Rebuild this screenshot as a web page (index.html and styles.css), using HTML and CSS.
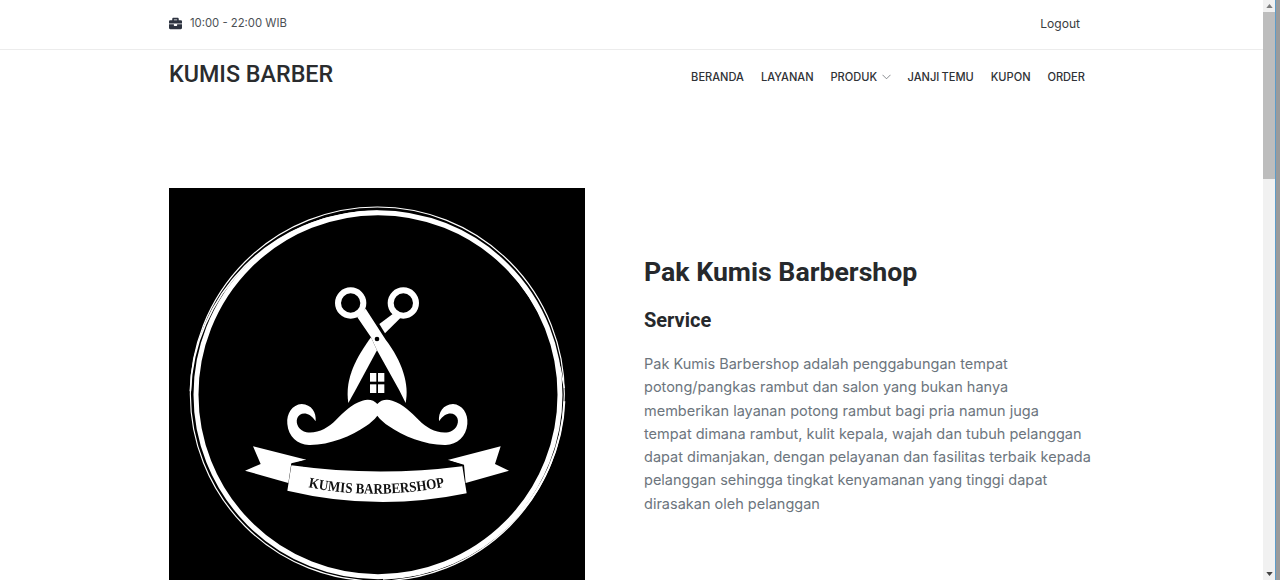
FILE: index.html
```html
<!DOCTYPE html>
<html lang="id">
<head>
<meta charset="utf-8">
<title>Kumis Barber</title>
<link rel="stylesheet" href="styles.css">
</head>
<body>
<div class="page">
  <div class="content">
    <div class="topbar">
      <div class="wrap topbar-inner">
        <div class="hours">
          <svg class="briefcase" viewBox="0 0 512 512" aria-hidden="true"><path d="M320 336c0 8.84-7.16 16-16 16h-96c-8.84 0-16-7.16-16-16v-48H0v144c0 25.6 22.4 48 48 48h416c25.6 0 48-22.4 48-48V288H320v48zm144-208h-80V80c0-25.6-22.4-48-48-48H176c-25.6 0-48 22.4-48 48v48H48c-25.6 0-48 22.4-48 48v80h512v-80c0-25.6-22.4-48-48-48zm-144 0H192V96h128v32z"/></svg>
          <span>10:00 - 22:00 WIB</span>
        </div>
        <a class="logout" href="#">Logout</a>
      </div>
    </div>
    <header class="wrap header">
      <a class="brand" href="#">KUMIS BARBER</a>
      <nav class="nav">
        <a href="#">BERANDA</a>
        <a href="#">LAYANAN</a>
        <a href="#" class="has-sub">PRODUK
          <svg class="chev" viewBox="0 0 9 6" aria-hidden="true"><polyline points="0.5,0.8 4.5,4.8 8.5,0.8"/></svg>
        </a>
        <a href="#">JANJI TEMU</a>
        <a href="#">KUPON</a>
        <a href="#">ORDER</a>
      </nav>
    </header>
    <section class="wrap about">
      <div class="logo-box">
        <svg class="logo" viewBox="0 0 1251 1251" role="img" aria-label="Logo Kumis Barbershop">
          <rect width="1251" height="1251" fill="#000"/>
          <g class="soft">
            <g fill="none" stroke="#fff">
              <circle cx="627" cy="620" r="546" stroke-width="15"/>
              <circle cx="625" cy="618" r="561" stroke-width="3.5"/>
              <path d="M64 610C72 330 302 72 626 70" stroke-width="5"/>
              <path d="M1186 640C1176 920 942 1164 642 1172" stroke-width="6"/>
              <path d="M620 70C902 72 1132 280 1186 600" stroke-width="4"/>
            </g>
            <g fill="none" stroke="#fff" stroke-width="18">
              <circle cx="545" cy="345" r="38"/>
              <circle cx="703" cy="345" r="38"/>
            </g>
            <g fill="#fff">
              <path d="M590 362L650 455C700 520 722 590 710 645L690 605L624 487L606 448L565 388Z"/>
              <path d="M671 378L631 408L648 436L698 386Z"/>
              <path d="M606 448C565 505 526 570 538 645L560 605L624 487Z"/>
              <rect x="603" y="555" width="19" height="26"/>
              <rect x="627" y="555" width="19" height="26"/>
              <rect x="603" y="589" width="19" height="26"/>
              <rect x="627" y="589" width="19" height="26"/>
              <path d="M625 648C615 636 598 632 580 638C548 648 524 672 500 697C478 720 445 738 412 733C392 729 378 708 385 690C392 672 420 668 440 700C442 672 428 650 398 648C370 650 352 676 355 708C358 745 385 770 420 771C480 772 548 745 590 715C604 705 616 695 625 683C634 695 646 705 660 715C702 745 770 772 830 771C865 770 892 745 895 708C898 676 880 650 852 648C822 650 808 672 810 700C830 668 858 672 865 690C872 708 858 729 838 733C805 738 772 720 750 697C726 672 702 648 670 638C652 632 635 636 625 648Z"/>
              <path d="M367 832Q624 868 880 835L893 916Q624 972 355 908Z"/>
              <path d="M252 775L412 815L367 826L358 885L228 848L275 828Z"/>
              <path d="M995 775L836 816L885 830L890 885L1020 848L978 828Z"/>
            </g>
            <g fill="none" stroke="#000" stroke-width="3">
              <path d="M367 830L410 817L405 836"/>
              <path d="M880 832L838 818L845 836"/>
            </g>
            <circle cx="624" cy="453" r="7" fill="#000"/>
            <path id="ribbon-line" d="M418 898Q624 938 832 895" fill="none"/>
            <text class="ribbon-text"><textPath href="#ribbon-line" textLength="412" lengthAdjust="spacingAndGlyphs">KUMIS BARBERSHOP</textPath></text>
          </g>
        </svg>
      </div>
      <div class="about-text">
        <h2>Pak Kumis Barbershop</h2>
        <h3>Service</h3>
        <p>Pak Kumis Barbershop adalah penggabungan tempat<br>potong/pangkas rambut dan salon yang bukan hanya<br>memberikan layanan potong rambut bagi pria namun juga<br>tempat dimana rambut, kulit kepala, wajah dan tubuh pelanggan<br>dapat dimanjakan, dengan pelayanan dan fasilitas terbaik kepada<br>pelanggan sehingga tingkat kenyamanan yang tinggi dapat<br>dirasakan oleh pelanggan</p>
      </div>
    </section>
  </div>
  <div class="scrollbar" aria-hidden="true">
    <div class="sb-track">
      <svg class="sb-arrow" viewBox="0 0 8 5"><polygon points="4,0 8,5 0,5"/></svg>
      <div class="sb-thumb"></div>
      <svg class="sb-arrow sb-down" viewBox="0 0 8 5"><polygon points="0,0 8,0 4,5"/></svg>
    </div>
    <div class="sb-edge"></div>
  </div>
</div>
</body>
</html>
```
FILE: styles.css
```css
* { box-sizing: border-box; }
html, body { margin: 0; height: 100%; overflow: hidden; background: #fff; }
body { font-family: Inter, "Noto Sans", sans-serif; color: #2c2f33; }
a { color: inherit; text-decoration: none; }

.page { display: flex; height: 100vh; overflow: hidden; }
.content { flex: 1; min-width: 0; overflow: hidden; }
.wrap { width: 925px; margin-left: 169px; }

.topbar { height: 50px; border-bottom: 1px solid #ececec; }
.topbar-inner { display: flex; justify-content: space-between; align-items: center; height: 46px; padding-right: 14px; }
.hours { display: flex; align-items: center; gap: 8px; font-size: 11.3px; color: #4b4f54; }
.briefcase { width: 13px; height: 13px; fill: #2d3340; }
.logout { font-size: 12.1px; color: #3a3d40; }

.header { display: flex; justify-content: space-between; align-items: flex-start; padding-right: 9px; height: 138px; }
.brand { font-family: Roboto, sans-serif; font-size: 23.3px; font-weight: 500; line-height: 28px; margin-top: 10px; color: #2a2c2e; }
.nav { display: flex; align-items: center; gap: 16.9px; margin-top: 19px; font-size: 11.1px; font-weight: 500; line-height: 16px; word-spacing: -0.8px; color: #2f3236; }
.has-sub { display: flex; align-items: center; gap: 4.5px; }
.chev { width: 9px; height: 6px; fill: none; stroke: #6b6f73; stroke-width: 0.8; }

.about { display: flex; align-items: center; gap: 59px; }
.logo-box { flex: none; width: 416px; height: 417px; overflow: hidden; }
.logo { display: block; width: 417px; height: 417px; }
.soft { filter: blur(0.4px); }
.ribbon-text { font-family: "Liberation Serif", serif; font-weight: 700; font-size: 44px; fill: #111; }

.about-text { flex: 1; min-width: 0; padding-bottom: 23px; }
.about-text h2 { margin: 0 0 18px; font-family: Roboto, sans-serif; font-size: 26.7px; font-weight: 700; line-height: 34px; color: #26292c; }
.about-text h3 { margin: 0 0 19px; font-family: Roboto, sans-serif; font-size: 20px; font-weight: 700; line-height: 26px; color: #26292c; }
.about-text p { margin: 0; font-size: 14.5px; line-height: 23.33px; color: #6c757d; white-space: nowrap; }

.scrollbar { flex: none; width: 17px; display: flex; height: 100%; }
.sb-track { width: 12px; background: #f1f1f1; display: flex; flex-direction: column; align-items: center; }
.sb-arrow { width: 7px; height: 4px; fill: #7d7d7d; margin-top: 4px; }
.sb-thumb { width: 12px; height: 167px; margin-top: 4px; background: #bdbdbd; }
.sb-down { margin-top: auto; margin-bottom: 4px; fill: #444; }
.sb-edge { flex: 1; background: #9b9b9b; border-left: 1px solid #5d9cc9; }
```
